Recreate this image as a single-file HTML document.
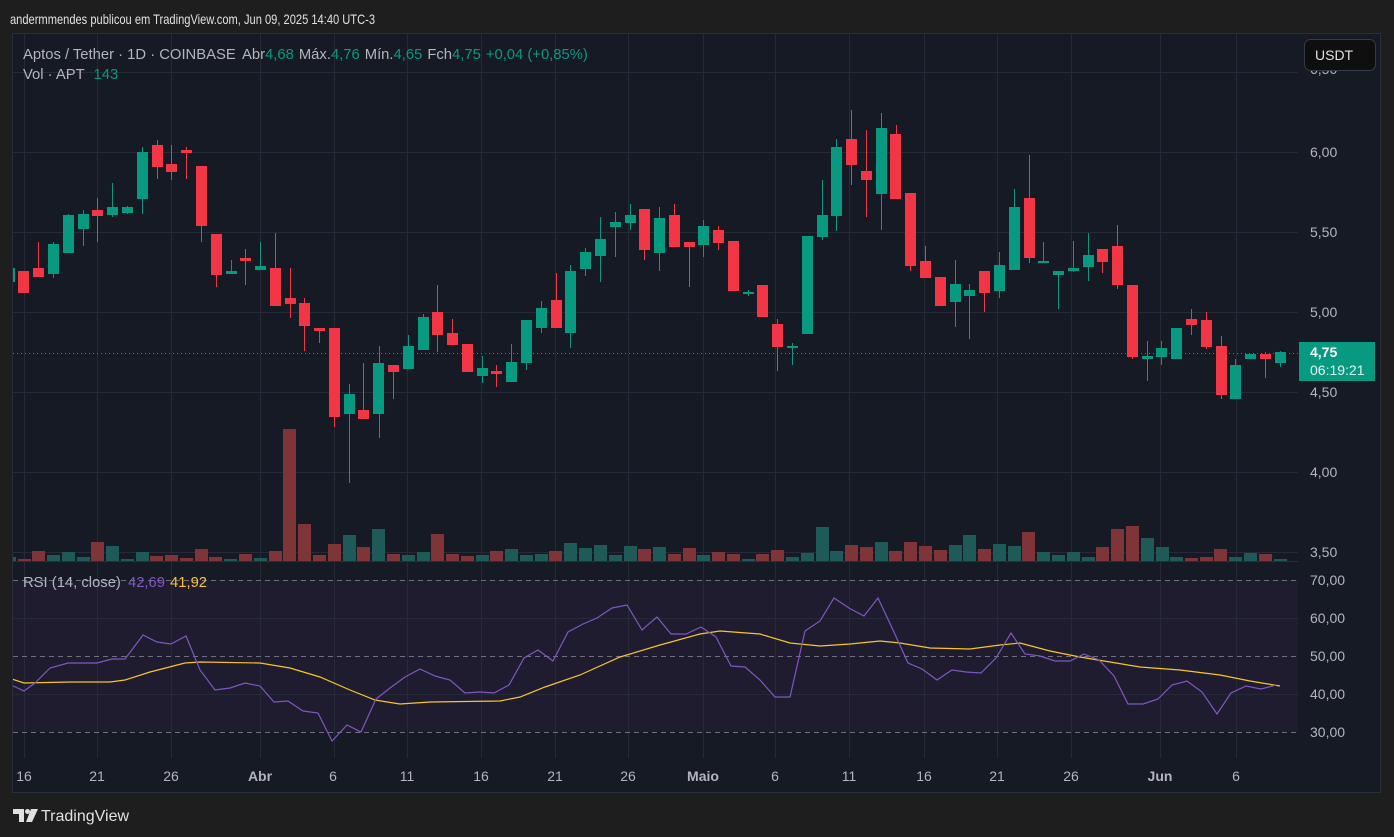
<!DOCTYPE html>
<html><head><meta charset="utf-8"><style>
html,body{margin:0;padding:0;background:#1e1e1e;width:1394px;height:837px;overflow:hidden}
svg text{font-family:"Liberation Sans",sans-serif}
</style></head><body>
<svg width="1394" height="837" viewBox="0 0 1394 837" xmlns="http://www.w3.org/2000/svg">
<rect width="1394" height="837" fill="#1e1e1e"/>
<text x="10" y="24" fill="#e0e0e0" font-size="14" textLength="365" lengthAdjust="spacingAndGlyphs">andermmendes publicou em TradingView.com, Jun 09, 2025 14:40 UTC-3</text>
<rect x="12.5" y="33.5" width="1368" height="759" fill="#161a25" stroke="#2a2e39"/>
<rect x="13" y="580" width="1285" height="152" fill="#1f1c30"/>
<g stroke="#252a36" stroke-width="1">
<path d="M13 72.5H1298M13 152.5H1298M13 232.5H1298M13 312.5H1298M13 392.5H1298M13 472.5H1298M13 552.5H1298M13 618.5H1298M13 694.5H1298"/>
<path d="M24.5 34V758M97.5 34V758M171.5 34V758M260.5 34V758M334.5 34V758M407.5 34V758M481.5 34V758M555.5 34V758M628.5 34V758M703.5 34V758M775.5 34V758M849.5 34V758M924.5 34V758M997.5 34V758M1071.5 34V758M1160.5 34V758M1236.5 34V758"/>
</g>
<path d="M13 561.5H1298" stroke="#2a2e39"/>
<g stroke="#6f6f80" stroke-dasharray="5 4"><path d="M13 580.5H1298M13 656.5H1298M13 732.5H1298"/></g>
<path d="M13 353.5H1298" stroke="#089981" stroke-dasharray="1 3"/>
<clipPath id="c"><rect x="13" y="34" width="1285" height="528"/></clipPath>
<g clip-path="url(#c)">
<g fill="#1e5a57">
<rect x="3" y="557" width="13" height="4"/><rect x="47" y="555" width="13" height="6"/><rect x="62" y="552" width="13" height="9"/><rect x="77" y="557" width="13" height="4"/><rect x="106" y="546" width="13" height="15"/><rect x="121" y="559" width="13" height="2"/><rect x="136" y="552" width="13" height="9"/><rect x="224" y="559" width="13" height="2"/><rect x="254" y="558" width="13" height="3"/><rect x="343" y="535" width="13" height="26"/><rect x="372" y="529" width="13" height="32"/><rect x="402" y="555" width="13" height="6"/><rect x="417" y="552" width="13" height="9"/><rect x="476" y="555" width="13" height="6"/><rect x="505" y="549" width="13" height="12"/><rect x="520" y="555" width="13" height="6"/><rect x="535" y="554" width="13" height="7"/><rect x="564" y="543" width="13" height="18"/><rect x="579" y="548" width="13" height="13"/><rect x="594" y="545" width="13" height="16"/><rect x="609" y="555" width="13" height="6"/><rect x="624" y="546" width="13" height="15"/><rect x="653" y="547" width="13" height="14"/><rect x="697" y="555" width="13" height="6"/><rect x="742" y="559" width="13" height="2"/><rect x="786" y="557" width="13" height="4"/><rect x="801" y="553" width="13" height="8"/><rect x="816" y="527" width="13" height="34"/><rect x="830" y="551" width="13" height="10"/><rect x="875" y="542" width="13" height="19"/><rect x="949" y="545" width="13" height="16"/><rect x="963" y="535" width="13" height="26"/><rect x="993" y="544" width="13" height="17"/><rect x="1008" y="546" width="13" height="15"/><rect x="1037" y="552" width="13" height="9"/><rect x="1052" y="555" width="13" height="6"/><rect x="1067" y="552" width="13" height="9"/><rect x="1082" y="557" width="13" height="4"/><rect x="1141" y="538" width="13" height="23"/><rect x="1156" y="547" width="13" height="14"/><rect x="1170" y="557" width="13" height="4"/><rect x="1229" y="557" width="13" height="4"/><rect x="1244" y="553" width="13" height="8"/><rect x="1274" y="559" width="13" height="2"/>
</g>
<g fill="#7f3538">
<rect x="18" y="559" width="13" height="2"/><rect x="32" y="551" width="13" height="10"/><rect x="91" y="542" width="13" height="19"/><rect x="150" y="556" width="13" height="5"/><rect x="165" y="555" width="13" height="6"/><rect x="180" y="558" width="13" height="3"/><rect x="195" y="549" width="13" height="12"/><rect x="209" y="557" width="13" height="4"/><rect x="239" y="554" width="13" height="7"/><rect x="269" y="551" width="13" height="10"/><rect x="283" y="429" width="13" height="132"/><rect x="298" y="524" width="13" height="37"/><rect x="313" y="555" width="13" height="6"/><rect x="328" y="544" width="13" height="17"/><rect x="357" y="547" width="13" height="14"/><rect x="387" y="554" width="13" height="7"/><rect x="431" y="534" width="13" height="27"/><rect x="446" y="554" width="13" height="7"/><rect x="461" y="556" width="13" height="5"/><rect x="490" y="551" width="13" height="10"/><rect x="549" y="551" width="13" height="10"/><rect x="638" y="549" width="13" height="12"/><rect x="668" y="554" width="13" height="7"/><rect x="683" y="548" width="13" height="13"/><rect x="712" y="552" width="13" height="9"/><rect x="727" y="554" width="13" height="7"/><rect x="756" y="554" width="13" height="7"/><rect x="771" y="550" width="13" height="11"/><rect x="845" y="545" width="13" height="16"/><rect x="860" y="547" width="13" height="14"/><rect x="889" y="551" width="13" height="10"/><rect x="904" y="542" width="13" height="19"/><rect x="919" y="546" width="13" height="15"/><rect x="934" y="550" width="13" height="11"/><rect x="978" y="549" width="13" height="12"/><rect x="1022" y="532" width="13" height="29"/><rect x="1096" y="547" width="13" height="14"/><rect x="1111" y="529" width="13" height="32"/><rect x="1126" y="526" width="13" height="35"/><rect x="1185" y="558" width="13" height="3"/><rect x="1200" y="557" width="13" height="4"/><rect x="1214" y="549" width="13" height="12"/><rect x="1259" y="554" width="13" height="7"/>
</g>
<g fill="#089981" stroke="#089981">
<path stroke-width="1" fill="none" d="M9.5 265V285M53.5 242V278M68.5 214V253M83.5 210V246M112.5 183V217M127.5 206V214M142.5 147V214M231.5 260V273M260.5 242V270M349.5 384V483M379.5 346V438M408.5 335V369M423.5 314V350M482.5 356V383M511.5 344V382M526.5 320V370M541.5 301V333M570.5 265V348M585.5 248V276M600.5 217V282M615.5 212V257M630.5 204V230M659.5 207V271M703.5 220V257M748.5 290V296M792.5 343V365M822.5 180V240M836.5 139V231M881.5 113V230M955.5 260V327M969.5 284V339M999.5 252V298M1014.5 189V270M1043.5 242V262M1058.5 271V309M1073.5 241V272M1088.5 233V281M1147.5 341V381M1161.5 341V365M1235.5 359V399M1280.5 351V367"/>
<g stroke="none">
<rect x="4" y="268" width="11" height="14"/><rect x="48" y="244" width="11" height="30"/><rect x="63" y="215" width="11" height="38"/><rect x="78" y="214" width="11" height="15"/><rect x="107" y="207" width="11" height="8"/><rect x="122" y="207" width="11" height="6"/><rect x="137" y="152" width="11" height="47"/><rect x="226" y="271" width="11" height="3"/><rect x="255" y="266" width="11" height="4"/><rect x="344" y="394" width="11" height="20"/><rect x="373" y="363" width="11" height="51"/><rect x="403" y="346" width="11" height="23"/><rect x="418" y="317" width="11" height="33"/><rect x="477" y="368" width="11" height="8"/><rect x="506" y="362" width="11" height="20"/><rect x="521" y="320" width="11" height="43"/><rect x="536" y="308" width="11" height="20"/><rect x="565" y="271" width="11" height="62"/><rect x="580" y="252" width="11" height="17"/><rect x="595" y="239" width="11" height="17"/><rect x="610" y="222" width="11" height="5"/><rect x="625" y="215" width="11" height="8"/><rect x="654" y="218" width="11" height="35"/><rect x="698" y="226" width="11" height="19"/><rect x="743" y="292" width="11" height="2"/><rect x="787" y="346" width="11" height="2"/><rect x="802" y="236" width="11" height="98"/><rect x="817" y="215" width="11" height="22"/><rect x="831" y="147" width="11" height="69"/><rect x="876" y="128" width="11" height="66"/><rect x="950" y="284" width="11" height="18"/><rect x="964" y="290" width="11" height="6"/><rect x="994" y="265" width="11" height="26"/><rect x="1009" y="207" width="11" height="63"/><rect x="1038" y="261" width="11" height="2"/><rect x="1053" y="271" width="11" height="4"/><rect x="1068" y="268" width="11" height="3"/><rect x="1083" y="255" width="11" height="12"/><rect x="1142" y="356" width="11" height="3"/><rect x="1156" y="348" width="11" height="9"/><rect x="1171" y="328" width="11" height="31"/><rect x="1230" y="365" width="11" height="34"/><rect x="1245" y="354" width="11" height="5"/><rect x="1275" y="352" width="11" height="11"/>
</g></g>
<g fill="#f23645" stroke="#f23645">
<path stroke-width="1" fill="none" d="M38.5 242V277M97.5 198V242M157.5 140V179M171.5 145V180M186.5 147V179M201.5 166V242M216.5 234V287M245.5 249V285M275.5 233V306M290.5 268V318M304.5 298V351M319.5 328V343M334.5 328V427M363.5 363V419M393.5 365V399M437.5 285V352M452.5 319V345M496.5 365V387M556.5 273V328M644.5 209V260M674.5 204V247M689.5 242V287M718.5 226V250M777.5 319V371M851.5 110V185M866.5 130V217M896.5 125V199M910.5 193V271M925.5 246V278M984.5 271V312M1029.5 155V263M1102.5 249V273M1117.5 225V289M1132.5 285V359M1191.5 309V335M1206.5 312V349M1221.5 336V399M1265.5 352V378"/>
<g stroke="none">
<rect x="18" y="271" width="11" height="22"/><rect x="33" y="268" width="11" height="9"/><rect x="92" y="210" width="11" height="6"/><rect x="152" y="145" width="11" height="22"/><rect x="166" y="164" width="11" height="8"/><rect x="181" y="150" width="11" height="3"/><rect x="196" y="166" width="11" height="60"/><rect x="211" y="234" width="11" height="41"/><rect x="240" y="258" width="11" height="3"/><rect x="270" y="268" width="11" height="38"/><rect x="285" y="298" width="11" height="6"/><rect x="299" y="303" width="11" height="23"/><rect x="314" y="328" width="11" height="3"/><rect x="329" y="328" width="11" height="89"/><rect x="358" y="410" width="11" height="9"/><rect x="388" y="365" width="11" height="7"/><rect x="432" y="312" width="11" height="23"/><rect x="447" y="333" width="11" height="12"/><rect x="462" y="344" width="11" height="28"/><rect x="491" y="371" width="11" height="3"/><rect x="551" y="300" width="11" height="28"/><rect x="639" y="209" width="11" height="41"/><rect x="669" y="215" width="11" height="32"/><rect x="684" y="242" width="11" height="5"/><rect x="713" y="230" width="11" height="13"/><rect x="728" y="241" width="11" height="50"/><rect x="757" y="285" width="11" height="32"/><rect x="772" y="324" width="11" height="23"/><rect x="846" y="139" width="11" height="26"/><rect x="861" y="171" width="11" height="9"/><rect x="890" y="134" width="11" height="65"/><rect x="905" y="193" width="11" height="73"/><rect x="920" y="261" width="11" height="17"/><rect x="935" y="277" width="11" height="29"/><rect x="979" y="271" width="11" height="22"/><rect x="1024" y="198" width="11" height="60"/><rect x="1097" y="249" width="11" height="13"/><rect x="1112" y="246" width="11" height="39"/><rect x="1127" y="285" width="11" height="72"/><rect x="1186" y="319" width="11" height="6"/><rect x="1201" y="320" width="11" height="27"/><rect x="1216" y="346" width="11" height="49"/><rect x="1260" y="354" width="11" height="5"/>
</g></g>
</g>
<clipPath id="r"><rect x="13" y="562" width="1285" height="196"/></clipPath>
<g clip-path="url(#r)" fill="none" stroke-width="1.2">
<polyline stroke="#f7c52b" points="9,678 24,683 70,682 110,682 125,680 150,672 185,663 200,662 260,663 290,668 320,677 350,690 375,700 400,704 430,702 500,701 520,697 545,687 580,675 620,657 660,645 700,634 720,631 760,634 790,643 820,646 850,644 880,641 900,643 930,648 970,649 1000,645 1020,643 1050,651 1080,657 1110,662 1140,667 1180,670 1220,675 1250,681 1280,686"/>
<polyline stroke="#7e57c2" points="9,684 24,691 35,683 50,668 68,663 97,663 112,659 125,659 143,635 157,642 171,644 186,636 200,670 215,690 230,688 245,683 260,686 274,702 288,701 303,711 318,713 332,741 347,725 361,732 376,699 390,688 405,677 420,669 435,676 450,680 465,693 480,692 494,693 509,685 524,658 538,650 553,661 568,632 583,624 597,618 612,608 627,605 642,630 657,617 671,634 686,634 701,627 716,637 731,666 745,667 760,680 775,697 790,697 805,631 820,621 834,598 849,608 864,616 878,598 893,630 908,663 922,669 937,680 952,670 966,672 981,673 996,658 1011,633 1025,654 1040,656 1055,661 1070,661 1084,654 1099,660 1114,676 1128,704 1143,704 1158,699 1172,685 1187,681 1202,692 1217,714 1231,693 1246,686 1261,689 1276,685"/>
</g>
<g font-size="14.8" fill="#b2b5be">
<text x="23" y="59">Aptos / Tether · 1D · COINBASE <tspan dx="3">Abr</tspan><tspan fill="#089981">4,68</tspan><tspan dx="5">Máx.</tspan><tspan fill="#089981">4,76</tspan><tspan dx="5">Mín.</tspan><tspan fill="#089981">4,65</tspan><tspan dx="5">Fch</tspan><tspan fill="#089981">4,75</tspan><tspan dx="5" fill="#089981">+0,04 (+0,85%)</tspan></text>
<text x="23" y="79">Vol · APT <tspan dx="5" fill="#089981">143</tspan></text>
<text x="23" y="587">RSI (14, close) <tspan dx="3" fill="#7e57c2">42,69</tspan><tspan dx="5" fill="#f7c52b">41,92</tspan></text>
</g>
<g font-size="14" fill="#b2b5be">
<text x="1310" y="74">6,50</text>
<text x="1310" y="157">6,00</text><text x="1310" y="237">5,50</text><text x="1310" y="317">5,00</text><text x="1310" y="397">4,50</text><text x="1310" y="477">4,00</text><text x="1310" y="557">3,50</text>
<text x="1310" y="585">70,00</text><text x="1310" y="623">60,00</text><text x="1310" y="661">50,00</text><text x="1310" y="699">40,00</text><text x="1310" y="737">30,00</text>
</g>
<rect x="1304.5" y="39.5" width="71" height="31" rx="6" fill="#0f0f0f" stroke="#363a45"/>
<text x="1315" y="60" font-size="14" fill="#e0e0e0">USDT</text>
<rect x="1299" y="342" width="76" height="39" fill="#089981"/>
<text x="1310" y="357" font-size="14" font-weight="bold" fill="#ffffff">4,75</text>
<text x="1310" y="375" font-size="14" fill="#dff5f0">06:19:21</text>
<g font-size="14" fill="#b2b5be" text-anchor="middle">
<text x="24" y="781">16</text><text x="97" y="781">21</text><text x="171" y="781">26</text><text x="260" y="781" font-weight="bold">Abr</text><text x="333" y="781">6</text><text x="407" y="781">11</text><text x="481" y="781">16</text><text x="555" y="781">21</text><text x="628" y="781">26</text><text x="703" y="781" font-weight="bold">Maio</text><text x="775" y="781">6</text><text x="849" y="781">11</text><text x="924" y="781">16</text><text x="997" y="781">21</text><text x="1071" y="781">26</text><text x="1160" y="781" font-weight="bold">Jun</text><text x="1236" y="781">6</text>
</g>
<g fill="#e0e0e0">
<path d="M13 809H24V822H19V814H13Z"/>
<circle cx="27.5" cy="811.5" r="2.5"/>
<path d="M31 809H38L32 822H26Z"/>
<text x="41" y="821" font-size="16">TradingView</text>
</g>
</svg>
</body></html>
